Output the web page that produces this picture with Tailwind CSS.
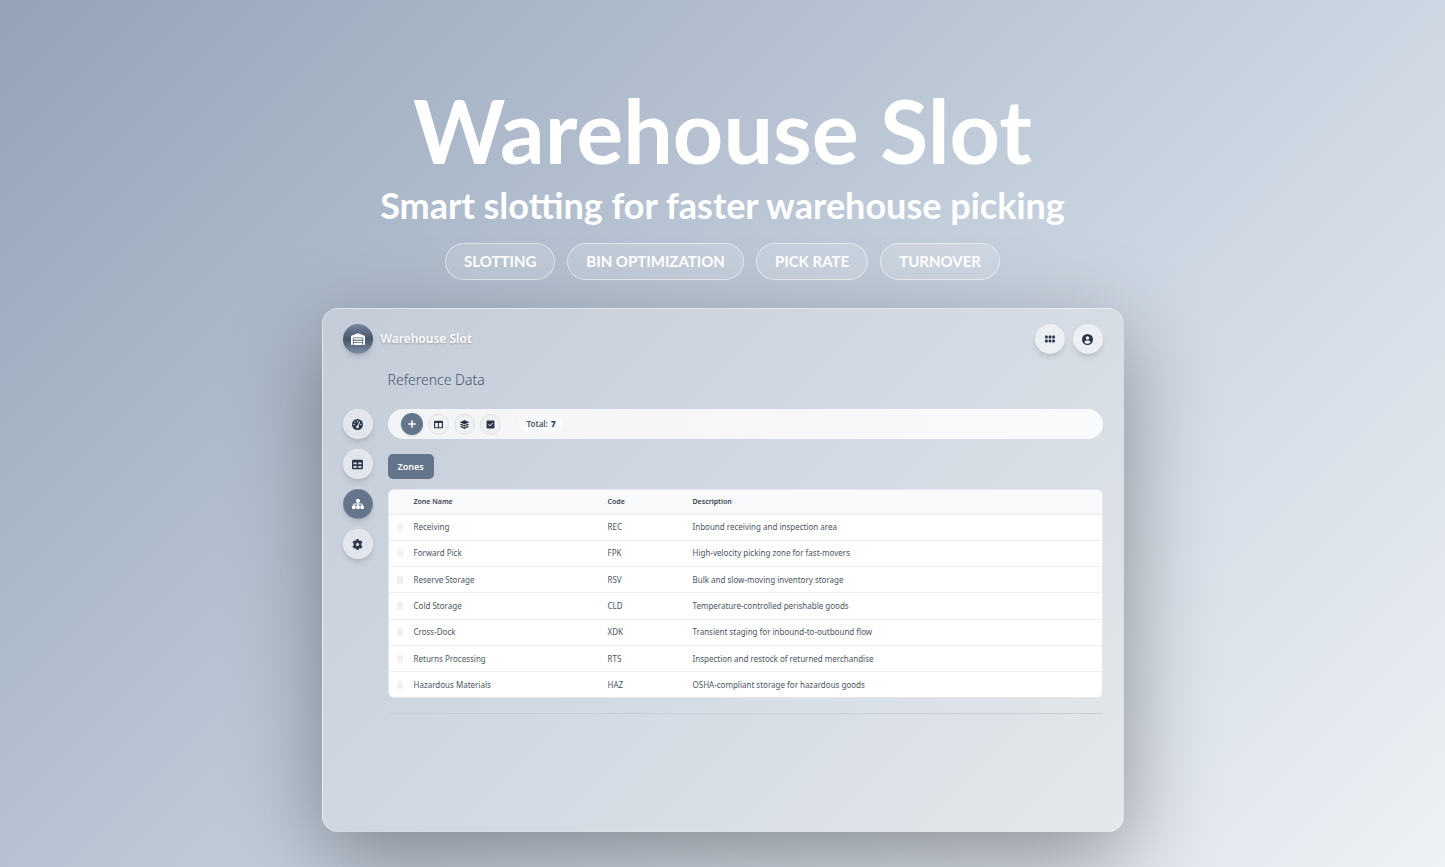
<!DOCTYPE html>
<html lang="en">
<head>
  <meta charset="UTF-8">
  <meta name="viewport" content="width=device-width, initial-scale=1.0">
  <title>Warehouse Slot</title>
  <script src="https://cdn.jsdelivr.net/npm/@tailwindcss/browser@4"></script>
</head>
<body class="min-h-screen overflow-hidden bg-[linear-gradient(135deg,#94a3b8_0%,#cbd5e1_60%,#eef1f5_100%)] font-['Noto_Sans',sans-serif] text-[#4b5563]">

  <!-- Hero -->
  <header class="flex flex-col items-center pt-[76px] font-['Lato',sans-serif] font-bold text-white">
    <h1 class="text-[88px] leading-[108px]">Warehouse Slot</h1>
    <p class="text-[36px] leading-[42px]">Smart slotting for faster warehouse picking</p>
    <ul class="mt-[17px] flex gap-3 text-[15px]">
      <li class="flex h-[37px] items-center rounded-full border border-white/50 bg-white/15 px-[18px]">SLOTTING</li>
      <li class="flex h-[37px] items-center rounded-full border border-white/50 bg-white/15 px-[18px]">BIN OPTIMIZATION</li>
      <li class="flex h-[37px] items-center rounded-full border border-white/50 bg-white/15 px-[18px]">PICK RATE</li>
      <li class="flex h-[37px] items-center rounded-full border border-white/50 bg-white/15 px-[18px]">TURNOVER</li>
    </ul>
  </header>

  <!-- App window -->
  <div class="mx-auto mt-7 min-h-[524px] w-full max-w-[802px] rounded-2xl border border-white/30 bg-[linear-gradient(135deg,#c4ccd8_0%,#d4dbe4_55%,#e4e8eb_100%)] px-5 pt-[15px] shadow-[0_28px_90px_rgba(0,0,0,0.36)]">

    <!-- Top bar -->
    <div class="flex items-center gap-2">
      <div class="grid size-[30px] place-items-center rounded-full bg-linear-to-b from-[#7787a0] via-[#475569] to-[#8290a6] text-white shadow-md">
        <svg class="size-4" viewBox="0 0 16 16" fill="currentColor"><path d="M1 14V5.800c0-.6.3-1 .8-1.200L7.400 2.500c.4-.2.8-.2 1.200 0l5.600 2.100c.5.2.8.6.8 1.200V14h-1.800V7.200c0-.4-.3-.7-.7-.7h-9c-.4 0-.7.3-.7.7V14z"/><path d="M3.600 7.300h8.800v1.500H3.600zM3.600 9.700h8.800v1.500H3.600zM3.600 12.100h8.800V14H3.600z"/></svg>
      </div>
      <span class="text-[12px] font-semibold text-white [text-shadow:0_1px_2px_rgba(0,0,0,0.25)]">Warehouse Slot</span>
      <button type="button" aria-label="Apps" class="ml-auto grid size-[30px] place-items-center rounded-full bg-[#eceff3] text-[#2b3648] shadow-md">
        <svg class="size-[10px]" viewBox="0 0 10 10" fill="currentColor"><rect y="1.500" width="2.800" height="3" rx="1"/><rect x="3.600" y="1.500" width="2.800" height="3" rx="1"/><rect x="7.200" y="1.500" width="2.800" height="3" rx="1"/><rect y="5.500" width="2.800" height="3" rx="1"/><rect x="3.600" y="5.500" width="2.800" height="3" rx="1"/><rect x="7.200" y="5.500" width="2.800" height="3" rx="1"/></svg>
      </button>
      <button type="button" aria-label="Account" class="grid size-[30px] place-items-center rounded-full bg-[#eceff3] text-[#2b3648] shadow-md">
        <svg class="size-[11px]" viewBox="0 0 12 12"><circle cx="6" cy="6" r="6" fill="currentColor"/><circle cx="6" cy="4.400" r="1.900" fill="#eceff3"/><path d="M2.600 9.200C3 7.700 4 7.200 6 7.200s3 .5 3.400 2A4.700 4.700 0 0 1 6 10.600a4.700 4.700 0 0 1-3.400-1.400z" fill="#eceff3"/></svg>
      </button>
    </div>

    <div class="mt-[15px] flex gap-[15px]">
      <!-- Side navigation -->
      <nav class="flex flex-col gap-[10px] pt-10 text-[#2b3648]">
        <button type="button" aria-label="Dashboard" class="grid size-[30px] place-items-center rounded-full border border-white/30 bg-[#e2e6ec] shadow-md">
          <svg class="size-[11px]" viewBox="0 0 12 12"><circle cx="6" cy="6" r="6" fill="currentColor"/><g fill="#e2e6ec"><circle cx="6" cy="2.200" r=".8"/><circle cx="3.300" cy="3.400" r=".8"/><circle cx="2.200" cy="6.100" r=".8"/><circle cx="9.800" cy="6.100" r=".8"/><circle cx="6" cy="8.600" r="1.500"/></g><path d="M6 8.600 8.200 3.300" stroke="#e2e6ec" stroke-width="1.200" stroke-linecap="round"/></svg>
        </button>
        <button type="button" aria-label="Tables" class="grid size-[30px] place-items-center rounded-full border border-white/30 bg-[#e2e6ec] shadow-md">
          <svg class="size-[11px]" viewBox="0 0 12 12" fill="currentColor"><path fill-rule="evenodd" d="M1.500.8h9c.8 0 1.500.7 1.500 1.500v7.400c0 .8-.7 1.500-1.500 1.500h-9C.7 11.200 0 10.500 0 9.700V2.300C0 1.500.7.8 1.500.8zM1.600 3.800v2h3.600v-2zm5.200 0v2h3.600v-2zM1.600 7.500v2h3.600v-2zm5.200 0v2h3.600v-2z"/></svg>
        </button>
        <button type="button" aria-label="Reference data" aria-current="page" class="grid size-[30px] place-items-center rounded-full border border-white/10 bg-[#64748b] text-white shadow-md">
          <svg class="size-3" viewBox="0 0 12 12" fill="currentColor"><rect x="4.200" y="1" width="3.600" height="3.600" rx=".9"/><rect y="7.400" width="3.600" height="3.600" rx=".9"/><rect x="4.200" y="7.400" width="3.600" height="3.600" rx=".9"/><rect x="8.400" y="7.400" width="3.600" height="3.600" rx=".9"/><path d="M6 4v4M1.800 8V6.800c0-.5.3-.8.8-.8h6.800c.5 0 .8.3.8.8V8" fill="none" stroke="currentColor" stroke-width="1.100"/></svg>
        </button>
        <button type="button" aria-label="Settings" class="grid size-[30px] place-items-center rounded-full border border-white/30 bg-[#e2e6ec] shadow-md">
          <svg class="size-[11px]" viewBox="0 0 12 12" fill="currentColor"><path fill-rule="evenodd" d="M4.900.2h2.200l.4 1.500 1 .6 1.500-.5 1.200 2L10 5v2l1.200 1.200-1.200 2-1.500-.5-1 .6-.4 1.500H4.900l-.4-1.500-1-.6-1.500.5-1.200-2L2 7V5L.8 3.800l1.200-2 1.500.5 1-.6zM6 4.100a1.900 1.900 0 1 0 0 3.800 1.900 1.900 0 0 0 0-3.800z" stroke="currentColor" stroke-width=".4" stroke-linejoin="round"/></svg>
        </button>
      </nav>

      <main class="min-w-0 flex-1">
        <h2 class="text-[14px] leading-[22px] font-light text-[#475569]">Reference Data</h2>

        <!-- Toolbar -->
        <div class="mt-[18px] flex h-[30px] items-center gap-[5px] rounded-full bg-linear-to-r from-[#f2f4f6] to-[#f9fafb] px-[13px] text-[#2b3648]">
          <button type="button" aria-label="Add" class="grid size-[22px] place-items-center rounded-full bg-[#64748b] text-white shadow">
            <svg class="size-2" viewBox="0 0 8 8" fill="none" stroke="currentColor" stroke-width="1.500" stroke-linecap="round"><path d="M4 .8v6.400M.8 4h6.400"/></svg>
          </button>
          <button type="button" aria-label="Columns" class="grid size-[21px] place-items-center rounded-full border border-[#dedfe2] bg-[#f0f1f2]">
            <svg class="size-[9px]" viewBox="0 0 10 10" fill="currentColor"><path fill-rule="evenodd" d="M1.200.7h7.600c.7 0 1.200.5 1.200 1.200v6.200c0 .7-.5 1.200-1.200 1.200H1.200C.5 9.300 0 8.800 0 8.100V1.900C0 1.200.5.7 1.200.7zM1.300 3.200V8h3.100V3.200zm4.300 0V8h3.100V3.200z"/></svg>
          </button>
          <button type="button" aria-label="Layers" class="grid size-[21px] place-items-center rounded-full border border-[#dedfe2] bg-[#f0f1f2]">
            <svg class="size-[9px]" viewBox="0 0 10 10" fill="currentColor"><path d="M4.600.2q.4-.2.800 0l4.300 2q.5.300 0 .6l-4.300 2q-.4.200-.8 0l-4.300-2q-.5-.3 0-.6z"/><path d="m1.500 4.200 2.700 1.300q.8.300 1.600 0l2.700-1.300 1.200.5q.5.300 0 .6l-4.300 2q-.4.200-.8 0l-4.300-2q-.5-.3 0-.6z"/><path d="m1.500 6.700 2.700 1.300q.8.300 1.600 0l2.700-1.300 1.200.5q.5.300 0 .6l-4.300 2q-.4.200-.8 0l-4.300-2q-.5-.3 0-.6z"/></svg>
          </button>
          <button type="button" aria-label="Select" class="grid size-[21px] place-items-center rounded-full border border-[#dedfe2] bg-[#f0f1f2]">
            <svg class="size-[9px]" viewBox="0 0 10 10"><rect x=".6" y=".6" width="8.800" height="8.800" rx="1.300" fill="currentColor"/><path d="m3 5.100 1.500 1.500L7.200 3.700" fill="none" stroke="#f0f1f2" stroke-width="1.100" stroke-linecap="round" stroke-linejoin="round"/></svg>
          </button>
          <span class="ml-[13px] rounded-full bg-[#fafbfc] px-2 text-[8px] leading-4 font-semibold text-[#4b5563]">Total: <b class="ml-px text-[#374151]">7</b></span>
        </div>

        <button type="button" class="mt-[15px] block h-[25px] rounded-[5px] bg-[#64748b] px-[10px] text-[9px] font-semibold text-white">Zones</button>

        <!-- Zones table -->
        <div class="mt-[10px] overflow-hidden rounded-md border border-[#e5e7eb] bg-white">
          <table class="h-[207px] w-full table-fixed text-left text-[8px]">
            <thead class="bg-[#f9fafb] text-[7px] text-[#374151]">
              <tr class="h-6 border-b border-[#e9ebee]">
                <th class="w-[25px]"></th>
                <th class="w-[194px] font-semibold">Zone Name</th>
                <th class="w-[85px] font-semibold">Code</th>
                <th class="font-semibold">Description</th>
              </tr>
            </thead>
            <tbody id="zones" class="divide-y divide-[#edeef0]"></tbody>
          </table>
        </div>
        <hr class="mt-[15px] border-[#c7ced7]">
      </main>
    </div>
  </div>

  <script>
    const zones = [
      ['Receiving', 'REC', 'Inbound receiving and inspection area'],
      ['Forward Pick', 'FPK', 'High-velocity picking zone for fast-movers'],
      ['Reserve Storage', 'RSV', 'Bulk and slow-moving inventory storage'],
      ['Cold Storage', 'CLD', 'Temperature-controlled perishable goods'],
      ['Cross-Dock', 'XDK', 'Transient staging for inbound-to-outbound flow'],
      ['Returns Processing', 'RTS', 'Inspection and restock of returned merchandise'],
      ['Hazardous Materials', 'HAZ', 'OSHA-compliant storage for hazardous goods']
    ];

    document.getElementById('zones').innerHTML = zones.map(([name, code, description]) => `
      <tr>
        <td class="pl-2"><svg class="h-2 w-[6px] text-[#e3e5e8]" viewBox="0 0 6 8" fill="currentColor"><path d="M.5.500h2v2h-2zM3.500.500h2v2h-2zM.5 3h2v2h-2zM3.500 3h2v2h-2zM.5 5.500h2v2h-2zM3.500 5.500h2v2h-2z"/></svg></td>
        <td>${name}</td>
        <td>${code}</td>
        <td>${description}</td>
      </tr>`).join('');
  </script>
</body>
</html>
